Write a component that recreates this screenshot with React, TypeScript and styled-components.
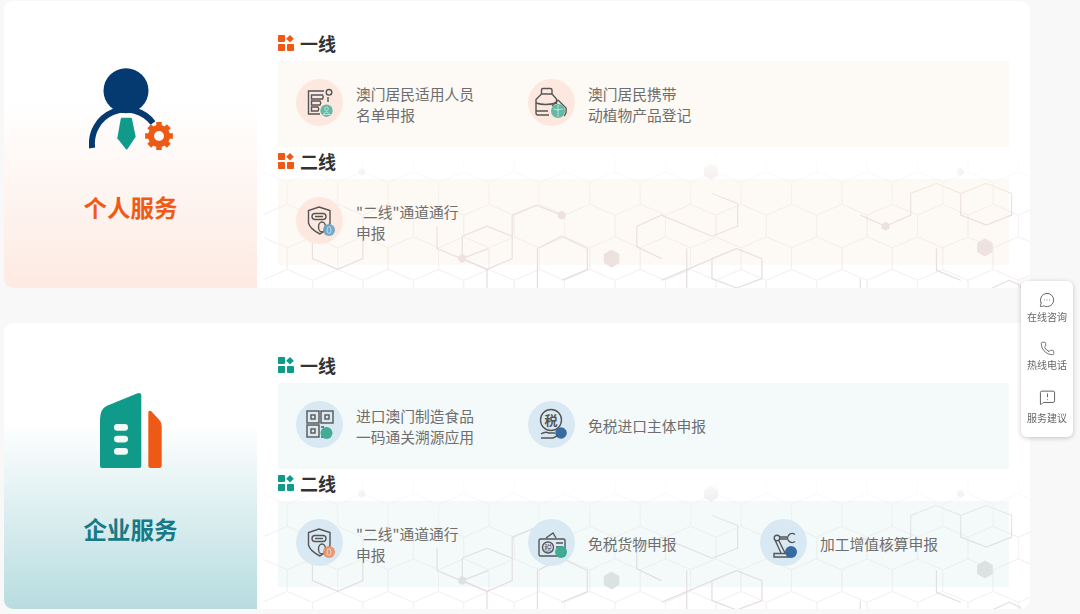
import React from "react";
import styled, { createGlobalStyle } from "styled-components";
import { MessageCircleMore, Phone, MessageSquareWarning } from "lucide-react";

const ORANGE = "#ee5a15";
const NAVY = "#043a6f";
const GREEN = "#109a8a";

type Tone = "orange" | "teal";

const TONES = {
  orange: {
    height: 287,
    heroTop: 67,
    titleGap: 41,
    fade: "#fdeae2",
    title: "#f05a14",
    mark: ORANGE,
    band: "rgba(250, 235, 220, 0.3)",
    circle: "#fce8df",
    dot: "#e9dfdf",
  },
  teal: {
    height: 286,
    heroTop: 66,
    titleGap: 42,
    fade: "#b7dce0",
    title: "#177a86",
    mark: GREEN,
    band: "rgba(210, 235, 235, 0.25)",
    circle: "#d9e9f3",
    dot: "#dfdfdf",
  },
};

type GlyphName = "roster" | "jar" | "pass" | "qr" | "tax" | "goods" | "robot";

interface Service {
  lines: string[];
  glyph: GlyphName;
  badge: string;
}

interface Section {
  title: string;
  services: Service[];
}

const personal: Section[] = [
  {
    title: "一线",
    services: [
      { lines: ["澳门居民适用人员", "名单申报"], glyph: "roster", badge: "#5db5a0" },
      { lines: ["澳门居民携带", "动植物产品登记"], glyph: "jar", badge: "#5db5a0" },
    ],
  },
  {
    title: "二线",
    services: [{ lines: ['"二线"通道通行', "申报"], glyph: "pass", badge: "#6ba5c8" }],
  },
];

const business: Section[] = [
  {
    title: "一线",
    services: [
      { lines: ["进口澳门制造食品", "一码通关溯源应用"], glyph: "qr", badge: "#3aa98f" },
      { lines: ["免税进口主体申报"], glyph: "tax", badge: "#2f659c" },
    ],
  },
  {
    title: "二线",
    services: [
      { lines: ['"二线"通道通行', "申报"], glyph: "pass", badge: "#e8926a" },
      { lines: ["免税货物申报"], glyph: "goods", badge: "#3aa98f" },
      { lines: ["加工增值核算申报"], glyph: "robot", badge: "#2f659c" },
    ],
  },
];

// the honeycomb is traced in the coordinates of a 1568x434 crop, so it stays squashed on purpose
const hexPoints = (cx: number, cy: number, r: number) =>
  [0, 60, 120, 180, 240, 300]
    .map((deg) => {
      const rad = ((deg + 30) * Math.PI) / 180;
      return `${cx + Math.cos(rad) * r * 2.06},${cy + Math.sin(rad) * r * 2.99}`;
    })
    .join(" ");

const buildGrid = () => {
  let d = "";
  for (let row = 0; row < 6; row++) {
    const y = row * 97.5 - 97.5;
    const shift = row % 2 ? 52 : 0;
    for (let col = -1; col < 17; col++) {
      const x = col * 104 + shift + 36;
      d += `M${x} ${y}L${x} ${y + 65}L${x + 52} ${y + 97.5}L${x + 104} ${y + 65}L${x + 104} ${y}L${x + 52} ${y - 32.5}Z`;
    }
  }
  return d;
};

const GRID_PATH = buildGrid();

const TRACE = [
  "M88 270V325L140 357L192 325V270",
  "M500 195L550 165L602 195M500 195V325L448 357L345 295V228",
  "M397 258L448 228L500 258M397 258V325L448 357M397 325L450 295M448 357V413",
  "M552 295L602 258L655 295V358L602 390M552 295V413",
  "M757 228L808 195L912 258L965 228V160L912 130M757 228V290L808 325",
  "M860 295V358L808 390M860 358L963 295L1015 325V385L963 413L912 385V325L963 295M860 358V413",
  "M1218 195L1270 228L1322 195V130L1375 100L1425 130V195L1478 225L1530 195V130L1478 100L1425 130",
  "M1375 295V360L1425 390M1218 385V413M1490 413L1525 390L1548 405V413",
];

const Honeycomb: React.FC<{ dot: string }> = ({ dot }) => (
  <HoneySvg viewBox="-14 0 1582 413" preserveAspectRatio="none">
    <FaintLines d={GRID_PATH} />
    {TRACE.map((d) => (
      <TraceLines key={d} d={d} />
    ))}
    {[
      [397, 325, 4.5],
      [602, 195, 4.5],
      [1270, 228, 4.5],
      [705, 325, 9],
      [1475, 292, 9],
      [190, 65, 4],
      [910, 65, 8],
      [1425, 65, 4],
    ].map(([x, y, r]) => (
      <polygon key={x} points={hexPoints(x, y, r)} fill={dot} />
    ))}
  </HoneySvg>
);

const PersonArt = () => (
  <HeroSvg viewBox="0 0 84 82">
    <circle cx="37" cy="22.7" r="22.5" fill={NAVY} />
    <path d="M3.2 80A34 34 0 0 1 64 55" fill="none" stroke={NAVY} strokeWidth="6" />
    <path
      d="M33 49.7H41.5Q42.7 49.7 43 51L46.7 68.7L38.5 81Q37.7 82 36.8 81L28.3 70.3L31.7 51Q32 49.7 33 49.7Z"
      fill={GREEN}
    />
    <circle cx="70" cy="68" r="8" fill="none" stroke={ORANGE} strokeWidth="6" />
    <path
      d="M70 54.1V60M70 76V81.9M56.1 68H62M78 68H83.9M60.2 58.2L64.3 62.3M75.7 73.7L79.8 77.8M60.2 77.8L64.3 73.7M75.7 62.3L79.8 58.2"
      stroke={ORANGE}
      strokeWidth="5.5"
    />
  </HeroSvg>
);

const BuildingArt = () => (
  <HeroSvg viewBox="0 0 84 82">
    <path
      d="M11 30Q11 20 18 16.7L48 4.4Q52.3 3 52.3 7V77Q52.3 79 50 79H13Q11 79 11 77Z"
      fill={GREEN}
    />
    <path
      d="M59.3 24Q59.3 21 62 22L70 30.5Q72.7 33 72.7 37V77Q72.7 79 70.5 79H61.5Q59.3 79 59.3 77Z"
      fill={ORANGE}
    />
    <rect x="25" y="35" width="14" height="6.7" rx="3.3" fill="#f2faf8" />
    <rect x="25" y="46.7" width="14" height="6.7" rx="3.3" fill="#f2faf8" />
    <rect x="25" y="59" width="14" height="6.7" rx="3.3" fill="#f2faf8" />
  </HeroSvg>
);

const SectionMark: React.FC<{ color: string }> = ({ color }) => (
  <MarkSvg viewBox="0 0 16 16" fill={color}>
    <rect x="0" y="0" width="7" height="7" rx="0.8" />
    <path d="M12 0L15.8 3.8L12 7.6L8.2 3.8Z" />
    <rect x="0" y="9" width="7" height="7" rx="0.8" />
    <rect x="9" y="9" width="7" height="7" rx="0.8" />
  </MarkSvg>
);

const BADGE_AT: Record<GlyphName, [number, number, number]> = {
  roster: [30.5, 31.7, 6.2],
  jar: [30, 32, 7],
  pass: [33, 33, 6],
  qr: [30.5, 32, 6],
  tax: [33, 32, 5.8],
  goods: [33, 33, 6],
  robot: [31, 33, 6],
};

const glyphs: Record<GlyphName, React.ReactNode> = {
  roster: (
    <>
      <path d="M28 12H12.5V35H24" />
      <path d="M15.5 16H26.5Q28 18 26.5 20H15.5ZM15.5 22H24Q25.5 24 24 26H15.5ZM15.5 28H22Q23.5 30 22 32H15.5Z" />
      <circle cx="33" cy="13.3" r="2.8" />
      <path d="M32 18V23" />
    </>
  ),
  jar: (
    <>
      <path d="M13.5 15V11Q13.5 9.5 15 9.5H22.5Q24 9.5 24 11V15L28.5 20V25" />
      <path d="M13.5 15L8 20.5V34Q8 36 10 36H21" />
      <path d="M13.5 15H24M8 24Q17 27 28 24M8 32H20" />
      <path d="M30 21L38 29Q39 34 36 37M30 21L24 27" />
    </>
  ),
  pass: (
    <>
      <path d="M23 10L34 13.5V26Q33 31 24 37Q14 32 12.5 26V13.5Z" />
      <rect x="16" y="16.5" width="14" height="6" rx="3" />
      <path d="M19 19.5H27" />
      <ellipse cx="26" cy="30" rx="3.5" ry="5" />
    </>
  ),
  qr: (
    <>
      <rect x="11" y="10" width="12" height="12" />
      <rect x="25" y="10" width="12" height="12" />
      <rect x="11" y="24" width="12" height="12" />
      <rect x="15" y="14" width="4" height="4" />
      <rect x="29" y="14" width="4" height="4" />
      <rect x="15" y="28" width="4" height="4" />
      <path d="M25 26H28M25 36H27" />
    </>
  ),
  tax: (
    <>
      <circle cx="23" cy="19" r="10.5" />
      <text x="23" y="24" textAnchor="middle" fontSize="13" fontWeight="700" stroke="none" fill="#555">
        税
      </text>
      <path d="M13 33Q17 30 21 32H27M13 37H25L31 34" />
    </>
  ),
  goods: (
    <>
      <rect x="11" y="20" width="26" height="17" rx="1.5" />
      <path d="M18 19L25 14L28 19" />
      <circle cx="20" cy="28.5" r="5.5" />
      <text x="20" y="32" textAnchor="middle" fontSize="8" stroke="none" fill="#555">
        税
      </text>
      <path d="M28 24H35M28 28H35" />
    </>
  ),
  robot: (
    <>
      <circle cx="17" cy="19" r="2.8" />
      <path d="M20 18H27M20 20H27" />
      <path d="M35 15.5A4.5 4.5 0 1 0 35 22.5" />
      <path d="M15.5 22L21 34M19 22L25 34" />
      <path d="M14 34.5H29V38H14Z" />
    </>
  ),
};

// small white details that sit on the coloured dot
const dotDetails: Partial<Record<GlyphName, React.ReactNode>> = {
  roster: (
    <>
      <circle cx="30.5" cy="29.8" r="1.8" />
      <path d="M27 35.5Q30.5 30.5 34 35.5Z" />
    </>
  ),
  jar: <path d="M30 26V38M25.5 30Q30 32 34.5 30" />,
  pass: <ellipse cx="33" cy="33" rx="2" ry="3.4" />,
};

const ServiceItem: React.FC<{ service: Service; tone: Tone }> = ({ service, tone }) => {
  const [cx, cy, r] = BADGE_AT[service.glyph];
  return (
    <Item>
      <Badge $tone={tone}>
        <GlyphSvg viewBox="0 0 47 47">
          {glyphs[service.glyph]}
          <BadgeDot cx={cx} cy={cy} r={r} fill={service.badge} />
          <DotDetail>{dotDetails[service.glyph]}</DotDetail>
        </GlyphSvg>
      </Badge>
      <ItemText>
        {service.lines.map((line) => (
          <div key={line}>{line}</div>
        ))}
      </ItemText>
    </Item>
  );
};

const ServiceCard: React.FC<{
  tone: Tone;
  title: string;
  art: React.ReactNode;
  sections: Section[];
}> = ({ tone, title, art, sections }) => (
  <Card $tone={tone}>
    <Honeycomb dot={TONES[tone].dot} />
    <Hero $tone={tone}>
      {art}
      <HeroTitle $tone={tone}>{title}</HeroTitle>
    </Hero>
    <Content>
      {sections.map((section) => (
        <div key={section.title}>
          <SectionHead>
            <SectionMark color={TONES[tone].mark} />
            {section.title}
          </SectionHead>
          <Band $tone={tone}>
            {section.services.map((service) => (
              <ServiceItem key={service.lines[0]} service={service} tone={tone} />
            ))}
          </Band>
        </div>
      ))}
    </Content>
  </Card>
);

const App: React.FC = () => (
  <>
    <GlobalStyle />
    <Page>
      <ServiceCard tone="orange" title="个人服务" art={<PersonArt />} sections={personal} />
      <ServiceCard tone="teal" title="企业服务" art={<BuildingArt />} sections={business} />
    </Page>
    <SideDock>
      <DockItem>
        <MessageCircleMore size={16} strokeWidth={1.3} />
        <DockLabel>在线咨询</DockLabel>
      </DockItem>
      <DockItem>
        <Phone size={15} strokeWidth={1.3} />
        <DockLabel>热线电话</DockLabel>
      </DockItem>
      <DockItem>
        <MessageSquareWarning size={17} strokeWidth={1.3} />
        <DockLabel $wide>服务建议</DockLabel>
      </DockItem>
    </SideDock>
  </>
);

const GlobalStyle = createGlobalStyle`
  html, body {
    margin: 0;
    background: #f8f8f8;
    font-family: "Noto Sans CJK SC", "Noto Sans", sans-serif;
  }
`;

const Page = styled.div`
  width: 1026px;
  height: 614px;
  padding: 1px 0 0 4px;
  display: flex;
  flex-direction: column;
  gap: 35px;
  overflow: hidden;
`;

const Card = styled.section<{ $tone: Tone }>`
  position: relative;
  display: flex;
  flex: none;
  height: ${({ $tone }) => TONES[$tone].height}px;
  background: #fff;
  border-radius: 9px;
  overflow: hidden;
`;

const HoneySvg = styled.svg`
  position: absolute;
  left: 259px;
  top: 149px;
  width: 767px;
  height: 138px;
  -webkit-mask-image: linear-gradient(transparent, #000 45%);
  mask-image: linear-gradient(transparent, #000 45%);
`;

const FaintLines = styled.path`
  fill: none;
  stroke: #f4f2f2;
  stroke-width: 1;
  vector-effect: non-scaling-stroke;
`;

const TraceLines = styled.path`
  fill: none;
  stroke: #e6dcdc;
  stroke-width: 1.2;
  vector-effect: non-scaling-stroke;
`;

const Hero = styled.div<{ $tone: Tone }>`
  flex: none;
  width: 253px;
  padding-top: ${({ $tone }) => TONES[$tone].heroTop}px;
  box-sizing: border-box;
  display: flex;
  flex-direction: column;
  align-items: center;
  background: linear-gradient(#fff 35%, ${({ $tone }) => TONES[$tone].fade});
`;

const HeroSvg = styled.svg`
  width: 84px;
  height: 82px;
  flex: none;
`;

const HeroTitle = styled.h2<{ $tone: Tone }>`
  margin: ${({ $tone }) => TONES[$tone].titleGap}px 0 0;
  font-size: 23.5px;
  line-height: 32px;
  font-weight: 700;
  color: ${({ $tone }) => TONES[$tone].title};
`;

const Content = styled.div`
  position: relative;
  flex: 1;
  padding: 30px 21px 0;
`;

const SectionHead = styled.h3`
  display: flex;
  align-items: center;
  gap: 6px;
  height: 24px;
  margin: 0 0 6px;
  font-size: 18px;
  font-weight: 700;
  color: #333;
`;

const MarkSvg = styled.svg`
  width: 16px;
  height: 16px;
`;

const Band = styled.div<{ $tone: Tone }>`
  display: flex;
  align-items: center;
  height: 86px;
  margin-bottom: 2px;
  padding-left: 17.5px;
  background: ${({ $tone }) => TONES[$tone].band};
`;

const Item = styled.div`
  display: flex;
  align-items: center;
  gap: 13.5px;
  width: 232px;
  flex: none;
`;

const Badge = styled.div<{ $tone: Tone }>`
  flex: none;
  width: 47px;
  height: 47px;
  margin-bottom: 3px;
  border-radius: 50%;
  background: ${({ $tone }) => TONES[$tone].circle};
`;

const GlyphSvg = styled.svg`
  display: block;
  width: 47px;
  height: 47px;
  fill: none;
  stroke: #555;
  stroke-width: 1.4;
`;

const BadgeDot = styled.circle`
  stroke: none;
  opacity: 0.95;
`;

const DotDetail = styled.g`
  stroke: #f4fbf9;
  stroke-width: 0.8;
  opacity: 0.75;
`;

const ItemText = styled.div`
  margin-bottom: 1px;
  font-size: 14.75px;
  line-height: 21px;
  color: #6e6e6e;
  white-space: nowrap;
`;

const SideDock = styled.aside`
  position: fixed;
  left: 1021px;
  top: 281px;
  width: 52px;
  height: 156px;
  padding-top: 11px;
  box-sizing: border-box;
  display: flex;
  flex-direction: column;
  align-items: center;
  gap: 18px;
  background: #fff;
  border-radius: 6px;
  box-shadow: 0 1px 5px rgba(0, 0, 0, 0.22);
  color: #555;
`;

const DockItem = styled.div`
  display: flex;
  flex-direction: column;
  align-items: center;
`;

const DockLabel = styled.span<{ $wide?: boolean }>`
  margin-top: ${({ $wide }) => ($wide ? "5px" : "2px")};
  font-size: 10px;
  line-height: 13px;
  color: #666;
  white-space: nowrap;
`;

export default App;
